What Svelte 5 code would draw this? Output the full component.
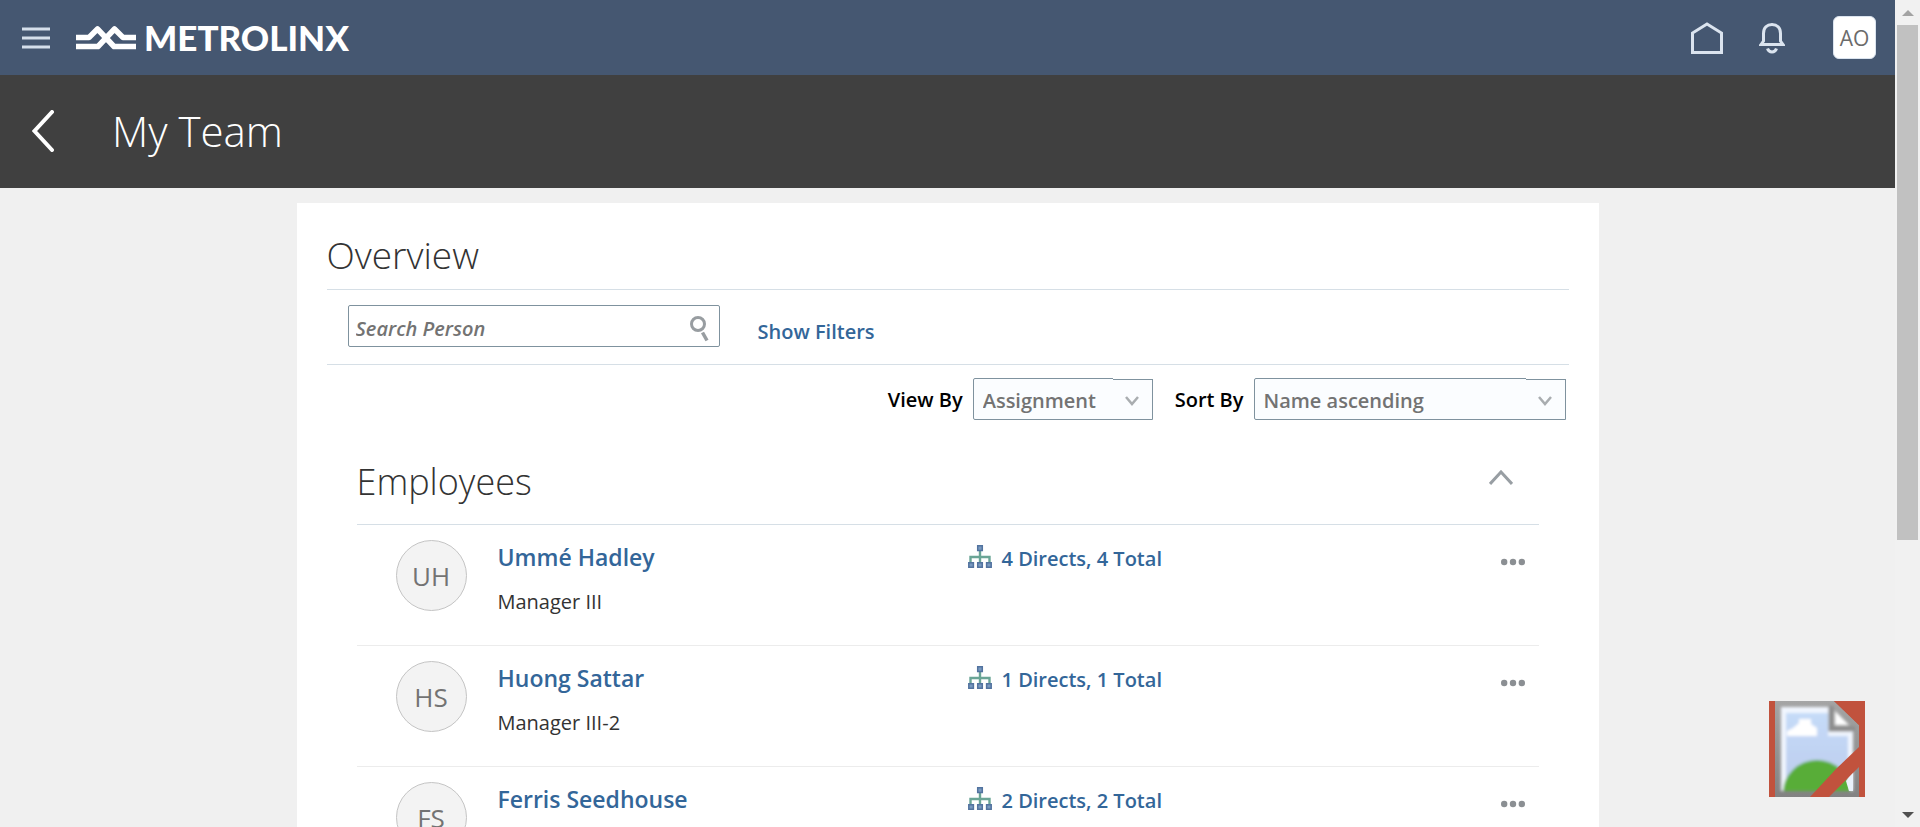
<script>
  const employees = [
    { initials: 'UH', name: 'Ummé Hadley', role: 'Manager III', directs: 4, total: 4 },
    { initials: 'HS', name: 'Huong Sattar', role: 'Manager III-2', directs: 1, total: 1 },
    { initials: 'FS', name: 'Ferris Seedhouse', role: '', directs: 2, total: 2 }
  ];
  let open = $state(true);
</script>

<div class="window">
  <div class="page">
    <header class="topbar">
      <button class="plain menu" aria-label="Navigator">
        <svg width="28" height="24" viewBox="0 0 28 24" fill="none" stroke="#d5dfeb" stroke-width="3">
          <path d="M0 3h28M0 12h28M0 21h28" />
        </svg>
      </button>
      <a class="brand" href="#home">
        <svg width="60" height="26" viewBox="0 0 60 26" fill="none" stroke="#fff" stroke-width="5.5" stroke-linejoin="round">
          <path d="M0 12.5H13L21.500 4L38 21.500H60" />
          <path d="M0 21.500H22L38.500 4L47 12.500H60" />
        </svg>
        <span>METROLINX</span>
      </a>
      <nav class="tools" aria-label="Global">
        <button class="plain" aria-label="Home">
          <svg width="32" height="34" viewBox="0 0 32 34" fill="none" stroke="#dbe4ef" stroke-width="3">
            <path d="M1.500 31.500V12L16 3L30.500 12V31.500Z" />
          </svg>
        </button>
        <button class="plain bell" aria-label="Notifications">
          <svg width="26" height="32" viewBox="0 0 26 32" fill="none" stroke="#dbe4ef" stroke-width="3">
            <path d="M2 22.500L4.500 19V11.500C4.500 5.500 8 2.500 13 2.500S21.500 5.500 21.500 11.500V19L24 22.500Z" />
            <path d="M8.500 26.500C10 31 16 31 17.500 26.500" />
          </svg>
        </button>
        <button class="user" aria-label="Settings and actions">AO</button>
      </nav>
    </header>

    <div class="titlebar">
      <button class="plain" aria-label="Back">
        <svg width="22" height="42" viewBox="0 0 22 42" fill="none" stroke="#fff" stroke-width="4" stroke-linecap="round">
          <path d="M20 2L2.500 21L20 40" />
        </svg>
      </button>
      <h1>My Team</h1>
    </div>

    <main class="card">
      <h2>Overview</h2>
      <form class="search">
        <div class="searchbox">
          <input type="text" placeholder="Search Person" aria-label="Search Person" />
          <svg width="19" height="26" viewBox="0 0 19 26" fill="none" stroke="#989da1" stroke-width="3">
            <circle cx="8" cy="8" r="6.500" />
            <path d="M12.500 16.500L17 24.500" stroke-width="3.500" />
          </svg>
        </div>
        <a href="#filters">Show Filters</a>
      </form>

      <div class="sorting">
        <label for="view">View By</label>
        <div class="select view">
          <select id="view"><option>Assignment</option><option>Person</option></select>
          <span class="arrow"><svg width="14" height="10" viewBox="0 0 14 10" fill="none" stroke="#a9adb0" stroke-width="2.500"><path d="M1 1L7 8L13 1" /></svg></span>
        </div>
        <label for="sort">Sort By</label>
        <div class="select sort">
          <select id="sort"><option>Name ascending</option><option>Name descending</option></select>
          <span class="arrow"><svg width="14" height="10" viewBox="0 0 14 10" fill="none" stroke="#a9adb0" stroke-width="2.500"><path d="M1 1L7 8L13 1" /></svg></span>
        </div>
      </div>

      <section>
        <div class="section-head">
          <h2>Employees</h2>
          <button class="plain" aria-label="Toggle Employees" aria-expanded={open} onclick={() => (open = !open)}>
            <svg width="24" height="16" viewBox="0 0 24 16" fill="none" stroke="#989ea3" stroke-width="3"><path d="M1 14L12 2L23 14" /></svg>
          </button>
        </div>
        {#if open}
          <ul>
            {#each employees as e}
              <li>
                <span class="avatar">{e.initials}</span>
                <div class="person">
                  <a class="name" href="#person">{e.name}</a>
                  {#if e.role}<span>{e.role}</span>{/if}
                </div>
                <div class="reports">
                  <svg width="24" height="24" viewBox="0 0 24 24">
                    <path d="M12 6v11M2.500 17v-5h19v5" fill="none" stroke="#6aa596" stroke-width="2.400" />
                    <g fill="#7899bf" stroke="#52739f" stroke-width="1.500">
                      <path d="M9.700 0.800h4.600v4.600h-4.600zM0.800 17.700h4.600v4.600h-4.600zM9.700 17.700h4.600v4.600h-4.600zM18.600 17.700h4.600v4.600h-4.600z" />
                    </g>
                  </svg>
                  <a href="#reports">{e.directs} Directs, {e.total} Total</a>
                </div>
                <button class="plain" aria-label="Actions">
                  <svg width="24" height="8" viewBox="0 0 24 8" fill="#8b8f93"><circle cx="3.200" cy="4" r="3.200" /><circle cx="12" cy="4" r="3.200" /><circle cx="20.800" cy="4" r="3.200" /></svg>
                </button>
              </li>
            {/each}
          </ul>
        {/if}
      </section>
    </main>

    <button class="plain assistant" aria-label="Assistant">
      <svg width="96" height="96" viewBox="0 0 96 96">
        <defs>
          <linearGradient id="sky" x1="0" y1="0" x2="0" y2="1"><stop offset="0" stop-color="#c5dbf8" /><stop offset="1" stop-color="#bccbed" /></linearGradient>
          <linearGradient id="frame" x1="0" y1="0" x2="0" y2="1"><stop offset="0" stop-color="#a5a5a5" /><stop offset="1" stop-color="#828282" /></linearGradient>
          <clipPath id="inside"><path d="M12 6H60V30H84V90H12Z" /></clipPath>
          <filter id="soft"><feGaussianBlur stdDeviation="1.500" /></filter>
        </defs>
        <rect width="96" height="96" fill="#c1523d" />
        <path d="M6 0H65L90 24V96H6Z" fill="url(#frame)" />
        <g filter="url(#soft)">
          <path d="M12 6H60V30H84V90H12Z" fill="#f1f6fe" />
          <path d="M17 12H59V35H79V89H17Z" fill="url(#sky)" />
          <path d="M18 35V30L24 27L30 22V18H42V23L48 27V35Z" fill="#fff" />
          <g clip-path="url(#inside)"><ellipse cx="48" cy="92" rx="34" ry="33" fill="#59ad39" /></g>
          <path d="M66 10L80 24H66Z" fill="#fff" />
          <path d="M62 5V28H86" fill="none" stroke="#8c8c8c" stroke-width="5" />
        </g>
        <path d="M90 46V66L60 96H41L67 68Z" fill="#c1523d" />
        <path d="M77 80L84 72V90H80Z" fill="#eaf2fb" />
        <path d="M65 0H90V24Z" fill="#c1523d" />
      </svg>
    </button>
  </div>

  <div class="scrollbar" aria-hidden="true">
    <svg width="12" height="6" viewBox="0 0 12 6" fill="#a3a3a3"><path d="M6 0L12 6H0Z" /></svg>
    <div class="thumb"></div>
    <svg width="12" height="6" viewBox="0 0 12 6" fill="#505050"><path d="M0 0H12L6 6Z" /></svg>
  </div>
</div>

<style>
  :global(body) { margin: 0; }
  .window {
    display: flex;
    height: 100vh;
    overflow: hidden;
    background: #f0f0f0;
    color: #333;
    font: 400 20px/28px "Open Sans", "Noto Sans", sans-serif;
  }
  .window * { box-sizing: border-box; }
  .page { position: relative; flex: 1; min-width: 0; overflow: hidden; }
  a { color: #336699; font-weight: 600; text-decoration: none; }
  svg { display: block; }
  .plain { padding: 0; border: 0; background: none; cursor: pointer; }

  .topbar { display: flex; align-items: center; height: 75px; padding: 0 19px 0 22px; background: #455771; }
  .brand { display: flex; align-items: center; gap: 8px; margin-left: 26px; color: #fff; font: 900 35px/40px Lato, sans-serif; }
  .brand span { padding-bottom: 2px; }
  .tools { display: flex; align-items: center; margin-left: auto; }
  .bell { margin: 0 48px 0 36px; }
  .user { width: 43px; height: 43px; padding: 0; border: 1px solid #dbe4ef; border-radius: 6px; background: #fff; color: #6b6b6b; font: 400 21px/28px "Open Sans", sans-serif; }

  .titlebar { display: flex; align-items: center; gap: 58px; height: 113px; padding: 0 32px 2px; background: #404040; color: #fff; }
  h1 { margin: 0; font-size: 42px; line-height: 60px; font-weight: 300; }

  .card { max-width: 1302px; min-height: 700px; margin: 15px auto 0; padding: 24px 30px; background: #fff; }
  h2 { margin: 0; font-size: 37px; line-height: 56px; font-weight: 300; }
  .search { display: flex; gap: 38px; margin-top: 6px; padding: 15px 21px 17px; border: solid #d6dfe6; border-width: 1px 0; }
  .search a { padding-top: 13px; font-size: 20px; }
  .searchbox { position: relative; width: 372px; height: 42px; }
  .searchbox svg { position: absolute; right: 11px; top: 11px; }
  input { width: 100%; height: 100%; padding: 5px 40px 0 7px; border: 1px solid #7f929e; border-radius: 2px; font: italic 600 20px/28px "Open Sans", sans-serif; }
  input::placeholder { color: #737373; opacity: 1; }

  .sorting { display: flex; align-items: center; justify-content: flex-end; margin-top: 13px; padding-right: 3px; color: #000; font-weight: 600; }
  .sorting label { padding-top: 2px; }
  .select { position: relative; height: 42px; margin-left: 10px; }
  .view { width: 180px; margin-right: 22px; }
  .sort { width: 312px; }
  select { appearance: none; width: 100%; height: 100%; padding: 3px 40px 0 9px; border: 1px solid #7f929e; border-radius: 2px 0 0 2px; background: #fbfdff; color: #737373; font: 600 20px/28px "Open Sans", sans-serif; }
  .arrow { position: absolute; top: 0; right: 0; width: 40px; border-top: 1px solid #fff; pointer-events: none; }
  .arrow svg { box-sizing: content-box; padding: 16px 13px 0 12px; border-top: 1px solid #7f929e; }

  section { padding: 0 30px; }
  .section-head { display: flex; align-items: flex-end; justify-content: space-between; margin-top: 34px; padding: 0 26px 14px 0; border-bottom: 1px solid #d6dfe6; }
  .section-head h2 { font-size: 36px; }
  .section-head .plain { padding-bottom: 24px; }
  ul { margin: 0; padding: 0; list-style: none; }
  li { display: flex; align-items: flex-start; height: 121px; padding: 15px 14px 0 39px; border-bottom: 1px solid #ececec; }
  .avatar { display: grid; place-items: center; width: 71px; height: 71px; border: 1px solid #c4c4c4; border-radius: 50%; background: #f3f3f3; color: #737373; font-size: 26px; }
  .person { display: flex; flex-direction: column; gap: 17px; flex: 1; margin-left: 31px; padding-top: 3px; }
  .name { font-size: 23px; }
  .reports { display: flex; gap: 10px; width: 533px; padding-top: 5px; }
  .reports a { font-size: 20px; }
  li .plain { margin-top: 18px; }

  .assistant { position: absolute; right: 30px; bottom: 30px; }
  .scrollbar { display: flex; flex-direction: column; align-items: center; width: 25px; padding: 10px 2px 9px; background: #f1f1f1; }
  .thumb { width: 21px; height: 63.7%; margin: 9px 0 auto; background: #c1c1c1; }
</style>
